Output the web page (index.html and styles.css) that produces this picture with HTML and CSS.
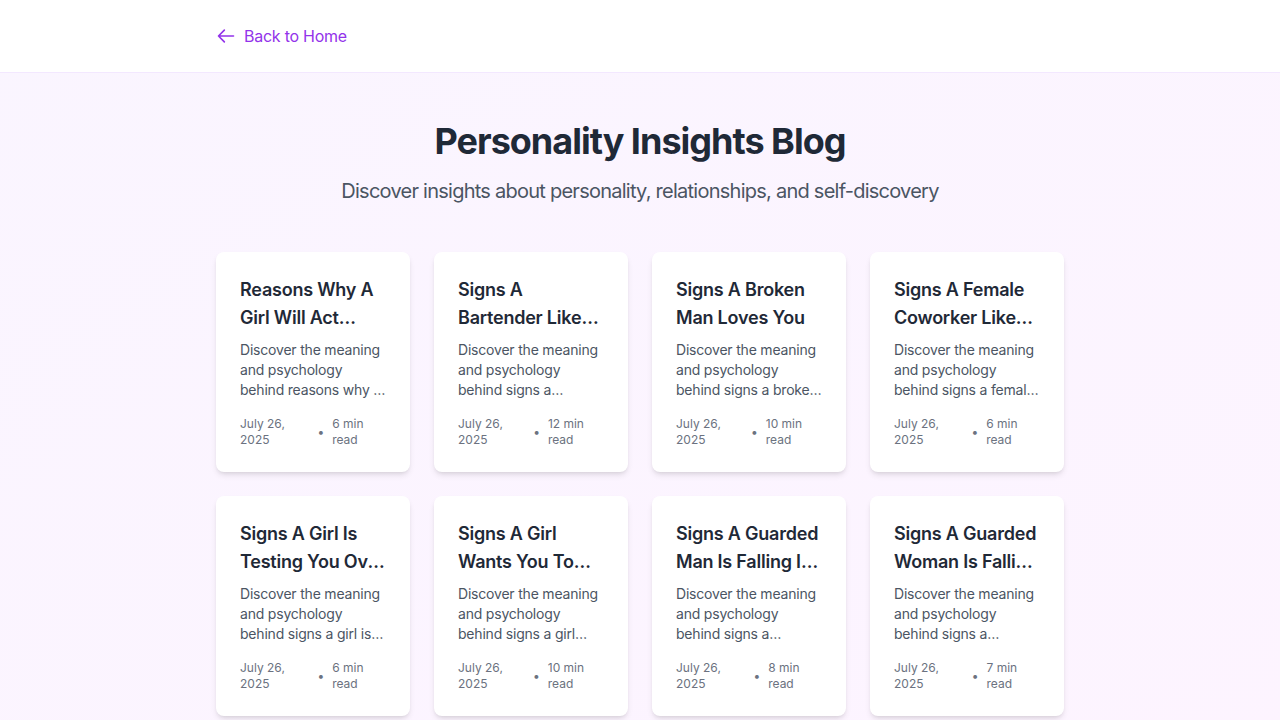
FILE: index.html
```html
<!DOCTYPE html>
<html lang="en">
<head>
<meta charset="utf-8">
<title>Personality Insights Blog</title>
<link rel="stylesheet" href="styles.css">
</head>
<body>
<div class="page">
  <header class="header">
    <div class="container">
      <a class="back" href="#">
        <svg class="back-icon" viewBox="0 0 24 24" width="20" height="20" fill="none" stroke="currentColor" stroke-width="2" stroke-linecap="round" stroke-linejoin="round"><path d="M10 19l-7-7m0 0l7-7m-7 7h18"/></svg>
        <span>Back to Home</span>
      </a>
    </div>
  </header>
  <main class="container main">
    <h1 class="title">Personality Insights Blog</h1>
    <p class="subtitle">Discover insights about personality, relationships, and self-discovery</p>
    <div class="grid">
      <article class="card">
        <h2 class="card-title">Reasons Why A Girl Will Act Distant When She Likes You</h2>
        <p class="card-desc">Discover the meaning and psychology behind reasons why a girl will act distant when she likes you</p>
        <div class="meta"><span>July 26, 2025</span><span class="dot">•</span><span>6 min read</span></div>
      </article>
      <article class="card">
        <h2 class="card-title">Signs A Bartender Likes You</h2>
        <p class="card-desc">Discover the meaning and psychology behind signs a bartender likes you and what it means</p>
        <div class="meta"><span>July 26, 2025</span><span class="dot">•</span><span>12 min read</span></div>
      </article>
      <article class="card">
        <h2 class="card-title">Signs A Broken Man Loves You</h2>
        <p class="card-desc">Discover the meaning and psychology behind signs a broken man loves you</p>
        <div class="meta"><span>July 26, 2025</span><span class="dot">•</span><span>10 min read</span></div>
      </article>
      <article class="card">
        <h2 class="card-title">Signs A Female Coworker Likes You</h2>
        <p class="card-desc">Discover the meaning and psychology behind signs a female coworker likes you</p>
        <div class="meta"><span>July 26, 2025</span><span class="dot">•</span><span>6 min read</span></div>
      </article>
      <article class="card">
        <h2 class="card-title">Signs A Girl Is Testing You Over Text</h2>
        <p class="card-desc">Discover the meaning and psychology behind signs a girl is testing you over text</p>
        <div class="meta"><span>July 26, 2025</span><span class="dot">•</span><span>6 min read</span></div>
      </article>
      <article class="card">
        <h2 class="card-title">Signs A Girl Wants You To Chase Her</h2>
        <p class="card-desc">Discover the meaning and psychology behind signs a girl wants you to chase her</p>
        <div class="meta"><span>July 26, 2025</span><span class="dot">•</span><span>10 min read</span></div>
      </article>
      <article class="card">
        <h2 class="card-title">Signs A Guarded Man Is Falling In Love With You</h2>
        <p class="card-desc">Discover the meaning and psychology behind signs a guarded man is falling in love with you</p>
        <div class="meta"><span>July 26, 2025</span><span class="dot">•</span><span>8 min read</span></div>
      </article>
      <article class="card">
        <h2 class="card-title">Signs A Guarded Woman Is Falling In Love With You</h2>
        <p class="card-desc">Discover the meaning and psychology behind signs a guarded woman is falling in love with you</p>
        <div class="meta"><span>July 26, 2025</span><span class="dot">•</span><span>7 min read</span></div>
      </article>
    </div>
  </main>
</div>
</body>
</html>
```
FILE: styles.css
```css
* { box-sizing: border-box; }
html, body { margin: 0; padding: 0; }
body {
  font-family: Inter, "Noto Sans", "Liberation Sans", sans-serif;
  color: #1f2937;
  -webkit-font-smoothing: antialiased;
}
.page {
  min-height: 100vh;
  background: linear-gradient(to bottom right, #faf5ff, #fdf4ff);
}
.container {
  max-width: 896px;
  margin: 0 auto;
  padding: 0 24px;
}
.header {
  background: #ffffff;
  border-bottom: 1px solid #f3e8ff;
}
.header .container {
  height: 72px;
  display: flex;
  align-items: center;
}
.back {
  display: inline-flex;
  align-items: center;
  gap: 8px;
  color: #9333ea;
  text-decoration: none;
  font-size: 16px;
  line-height: 24px;
  letter-spacing: -0.25px;
}
.back-icon { display: block; }
.main {
  padding-top: 48px;
  padding-bottom: 48px;
}
.title {
  margin: 0;
  text-align: center;
  font-size: 36px;
  line-height: 40px;
  font-weight: 700;
  color: #1f2937;
  letter-spacing: -1px;
}
.subtitle {
  margin: 16px 0 47px;
  text-align: center;
  font-size: 20px;
  line-height: 28px;
  color: #4b5563;
  letter-spacing: -0.75px;
}
.grid {
  display: grid;
  grid-template-columns: repeat(4, 1fr);
  gap: 24px;
}
.card {
  background: #ffffff;
  border-radius: 8px;
  padding: 24px;
  box-shadow: 0 4px 6px -1px rgba(0,0,0,0.1), 0 2px 4px -2px rgba(0,0,0,0.1);
}
.card-title {
  margin: 0 0 8px;
  font-size: 18px;
  line-height: 28px;
  font-weight: 600;
  color: #1f2937;
  letter-spacing: -0.22px;
  display: -webkit-box;
  -webkit-line-clamp: 2;
  -webkit-box-orient: vertical;
  overflow: hidden;
}
.card-desc {
  margin: 0 0 16px;
  font-size: 14px;
  line-height: 20px;
  color: #4b5563;
  letter-spacing: -0.2px;
  display: -webkit-box;
  -webkit-line-clamp: 3;
  -webkit-box-orient: vertical;
  overflow: hidden;
}
.meta {
  display: flex;
  align-items: center;
  gap: 8px;
  font-size: 12px;
  line-height: 16px;
  color: #6b7280;
}
```
